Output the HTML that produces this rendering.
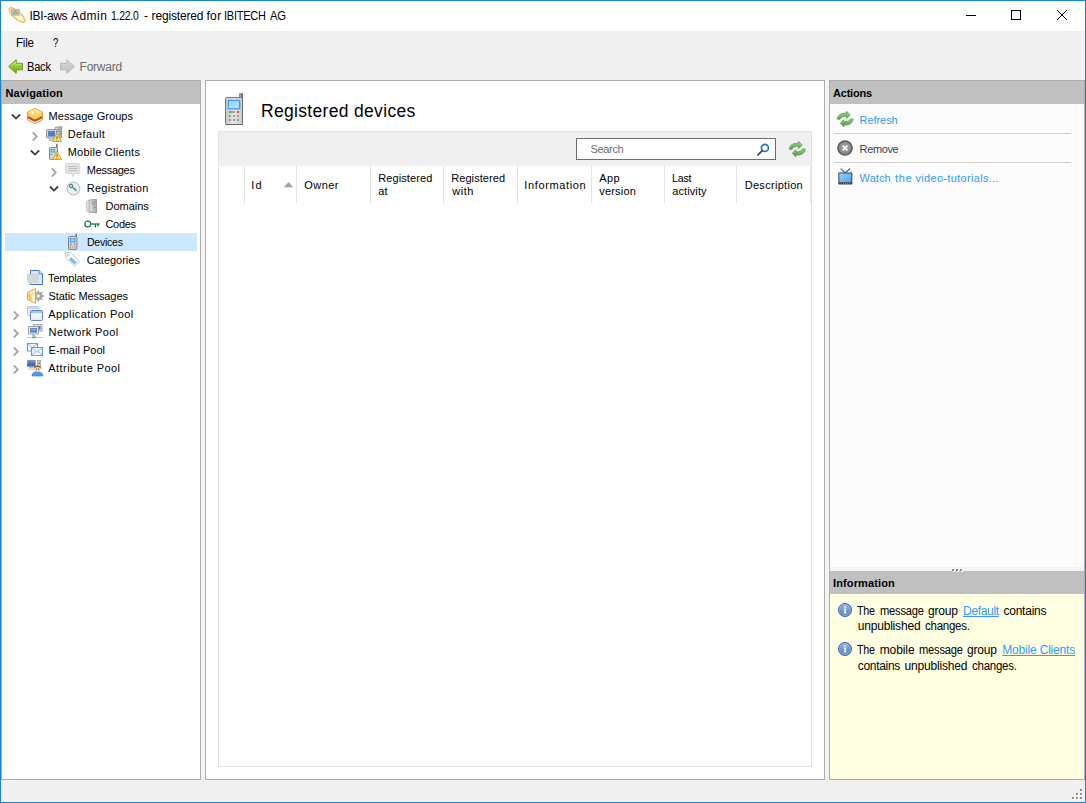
<!DOCTYPE html>
<html lang="en"><head><meta charset="utf-8"><title>IBI-aws Admin 1.22.0 - registered for IBITECH AG</title>
<style>
html,body{margin:0;padding:0}
body{width:1086px;height:803px;position:relative;overflow:hidden;background:#f0f0f0;font-family:"Liberation Sans",sans-serif;font-size:12px;color:#000}
.b{position:absolute;box-sizing:border-box}
.t{position:absolute;white-space:pre;transform-origin:0 0}
.t u{color:#3399ff}
svg{position:absolute;overflow:visible}
.sep{position:absolute;width:1px;top:166px;height:37px;background:#e3e3e3}
</style></head>
<body>
<svg width="0" height="0" style="left:0;top:0"><defs>
<linearGradient id="gGreen" x1="0" y1="0" x2="0" y2="1"><stop offset="0" stop-color="#b5e061"/><stop offset="0.5" stop-color="#8fc92d"/><stop offset="1" stop-color="#6aa610"/></linearGradient>
<linearGradient id="gGrey" x1="0" y1="0" x2="0" y2="1"><stop offset="0" stop-color="#dcdcdc"/><stop offset="1" stop-color="#bdbdbd"/></linearGradient>
<linearGradient id="gPhone" x1="0" y1="0" x2="1" y2="0"><stop offset="0" stop-color="#c4c4c4"/><stop offset="0.45" stop-color="#e6e6e6"/><stop offset="1" stop-color="#cdcdcd"/></linearGradient>
<linearGradient id="gScreen" x1="0" y1="0" x2="0" y2="1"><stop offset="0" stop-color="#9fd6fb"/><stop offset="1" stop-color="#b4e0fb"/></linearGradient>
<linearGradient id="gRef" x1="0" y1="0" x2="0" y2="1"><stop offset="0" stop-color="#a6d99a"/><stop offset="1" stop-color="#55a34b"/></linearGradient>
<linearGradient id="gRef2" x1="0" y1="1" x2="0" y2="0"><stop offset="0" stop-color="#8fce84"/><stop offset="1" stop-color="#479a3e"/></linearGradient>
<radialGradient id="gInfo" cx="0.5" cy="0.3" r="0.7"><stop offset="0" stop-color="#9bbbe6"/><stop offset="1" stop-color="#3f6fb5"/></radialGradient>
<radialGradient id="gRem" cx="0.5" cy="0.45" r="0.6"><stop offset="0" stop-color="#a8a8a8"/><stop offset="1" stop-color="#7a7a7a"/></radialGradient>
<linearGradient id="gTower" x1="0" y1="0" x2="1" y2="0"><stop offset="0" stop-color="#e6e6e6"/><stop offset="1" stop-color="#a8a8a8"/></linearGradient>
<linearGradient id="gWin" x1="0" y1="0" x2="0" y2="1"><stop offset="0" stop-color="#ffffff"/><stop offset="1" stop-color="#e3eaf6"/></linearGradient>
<linearGradient id="gTv" x1="0" y1="0" x2="1" y2="1"><stop offset="0" stop-color="#9ad4ff"/><stop offset="1" stop-color="#4aa3ee"/></linearGradient>
</defs></svg>
<div class="b" style="left:1px;top:1px;width:1084px;height:30px;background:#fff"></div>
<svg style="left:8px;top:6px" width="18" height="18" viewBox="0 0 18 18"><ellipse cx="9" cy="9" rx="10" ry="3.6" transform="rotate(42 9 9)" fill="#fff3d6"/>
<rect x="3" y="2.8" width="8.8" height="7" fill="#9cbcdb" opacity="0.9"/>
<path d="M5.6,8.4 L7.4,4.4 L9.2,8.4 M6.3,7 H8.5" fill="none" stroke="#c9a033" stroke-width="1"/>
<ellipse cx="9" cy="9" rx="10" ry="3.6" transform="rotate(42 9 9)" fill="none" stroke="#f2b444" stroke-width="1.4" opacity="0.85"/></svg>
<svg style="left:960px;top:5px" width="120" height="22" viewBox="0 0 120 22"><path d="M6,10.5 H16" stroke="#000" stroke-width="1"/><rect x="51.5" y="5.5" width="9" height="9" fill="none" stroke="#000" stroke-width="1"/>
<path d="M97,5 L107,15 M107,5 L97,15" stroke="#000" stroke-width="1"/></svg>
<svg style="left:8px;top:59px" width="15" height="15" viewBox="0 0 15 15"><path d="M0.7,7.5 L8.2,0.7 L8.2,4.3 L14.4,4.3 L14.4,10.8 L8.2,10.8 L8.2,14.4 Z" fill="url(#gGreen)" stroke="#6a9a1c" stroke-width="1" stroke-linejoin="round"/><path d="M2.6,7.3 L7.3,3 L7.3,5.3 L13.4,5.3" fill="none" stroke="#d4f08e" stroke-width="0.8" opacity="0.8"/></svg>
<svg style="left:60px;top:59px" width="15" height="15" viewBox="0 0 15 15"><path d="M14.3,7.5 L6.8,0.7 L6.8,4.3 L0.6,4.3 L0.6,10.8 L6.8,10.8 L6.8,14.4 Z" fill="url(#gGrey)" stroke="#b6b6b6" stroke-width="1" stroke-linejoin="round"/></svg>
<div class="b" style="left:201px;top:80px;width:4px;height:700px;background:#f4f4f4"></div>
<div class="b" style="left:825px;top:80px;width:4px;height:700px;background:#f4f4f4"></div>
<div class="b" style="left:1px;top:80px;width:200px;height:700px;background:#fff;border:1px solid #adadad"></div>
<div class="b" style="left:2px;top:81px;width:198px;height:23px;background:#c0c0c0"></div>
<div class="b" style="left:5px;top:233px;width:192px;height:18px;background:#cce8ff"></div>
<div class="b" style="left:205px;top:80px;width:620px;height:700px;background:#fff;border:1px solid #adadad"></div>
<div class="b" style="left:218px;top:131px;width:594px;height:636px;border:1px solid #e2e2e2"></div>
<div class="b" style="left:219px;top:132px;width:592px;height:34px;background:#f0f0f0"></div>
<div class="sep" style="left:244px"></div>
<div class="sep" style="left:296px"></div>
<div class="sep" style="left:370px"></div>
<div class="sep" style="left:443px"></div>
<div class="sep" style="left:517px"></div>
<div class="sep" style="left:591px"></div>
<div class="sep" style="left:664px"></div>
<div class="sep" style="left:736px"></div>
<div class="sep" style="left:810px"></div>
<div class="b" style="left:576px;top:138px;width:200px;height:22px;background:#fff;border:1px solid #6e6e6e"></div>
<svg style="left:283px;top:181px" width="11" height="7" viewBox="0 0 11 7"><path d="M0.8,6.2 L5.5,1 L10.2,6.2 Z" fill="#a3a3a3"/></svg>
<div class="b" style="left:829px;top:80px;width:256px;height:700px;background:#fcfcfc;border:1px solid #adadad"></div>
<div class="b" style="left:830px;top:81px;width:254px;height:23px;background:#c0c0c0"></div>
<div class="b" style="left:834px;top:133px;width:237px;height:1px;background:#cdcdcd"></div>
<div class="b" style="left:834px;top:162px;width:237px;height:1px;background:#cdcdcd"></div>
<div class="b" style="left:830px;top:567px;width:254px;height:4px;background:#f4f4f4"></div>
<div class="b" style="left:830px;top:571px;width:254px;height:23px;background:#c0c0c0"></div>
<div class="b" style="left:830px;top:594px;width:254px;height:185px;background:#ffffe1"></div>
<svg style="left:952px;top:569px" width="12" height="4" viewBox="0 0 12 4"><rect x="1" y="1" width="2" height="2" fill="#fff"/><rect x="0" y="0" width="2" height="2" fill="#8c8c8c"/><rect x="5" y="1" width="2" height="2" fill="#fff"/><rect x="4" y="0" width="2" height="2" fill="#8c8c8c"/><rect x="9" y="1" width="2" height="2" fill="#fff"/><rect x="8" y="0" width="2" height="2" fill="#8c8c8c"/></svg>
<svg style="left:1072px;top:789px" width="12" height="12" viewBox="0 0 12 12"><rect x="9" y="1" width="2" height="2" fill="#fff"/><rect x="8" y="0" width="2" height="2" fill="#8f8f8f"/><rect x="5" y="5" width="2" height="2" fill="#fff"/><rect x="4" y="4" width="2" height="2" fill="#8f8f8f"/><rect x="9" y="5" width="2" height="2" fill="#fff"/><rect x="8" y="4" width="2" height="2" fill="#8f8f8f"/><rect x="1" y="9" width="2" height="2" fill="#fff"/><rect x="0" y="8" width="2" height="2" fill="#8f8f8f"/><rect x="5" y="9" width="2" height="2" fill="#fff"/><rect x="4" y="8" width="2" height="2" fill="#8f8f8f"/><rect x="9" y="9" width="2" height="2" fill="#fff"/><rect x="8" y="8" width="2" height="2" fill="#8f8f8f"/></svg>
<svg style="left:9.5px;top:112.8px" width="12" height="8" viewBox="0 0 12 8"><polyline points="1.9,1.5 6,5.6 10.1,1.5" fill="none" stroke="#404040" stroke-width="1.8"/></svg>
<svg style="left:30.799999999999997px;top:129.5px" width="8" height="12" viewBox="0 0 8 12"><polyline points="1.8,2.4 5.8,6.5 1.8,10.6" fill="none" stroke="#a3a3a3" stroke-width="1.8"/></svg>
<svg style="left:28.5px;top:148.7px" width="12" height="8" viewBox="0 0 12 8"><polyline points="1.9,1.5 6,5.6 10.1,1.5" fill="none" stroke="#404040" stroke-width="1.8"/></svg>
<svg style="left:49.9px;top:165.5px" width="8" height="12" viewBox="0 0 8 12"><polyline points="1.8,2.4 5.8,6.5 1.8,10.6" fill="none" stroke="#a3a3a3" stroke-width="1.8"/></svg>
<svg style="left:47.5px;top:184.7px" width="12" height="8" viewBox="0 0 12 8"><polyline points="1.9,1.5 6,5.6 10.1,1.5" fill="none" stroke="#404040" stroke-width="1.8"/></svg>
<svg style="left:11.7px;top:309.4px" width="8" height="12" viewBox="0 0 8 12"><polyline points="1.8,2.4 5.8,6.5 1.8,10.6" fill="none" stroke="#a3a3a3" stroke-width="1.8"/></svg>
<svg style="left:11.7px;top:327.4px" width="8" height="12" viewBox="0 0 8 12"><polyline points="1.8,2.4 5.8,6.5 1.8,10.6" fill="none" stroke="#a3a3a3" stroke-width="1.8"/></svg>
<svg style="left:11.7px;top:345.4px" width="8" height="12" viewBox="0 0 8 12"><polyline points="1.8,2.4 5.8,6.5 1.8,10.6" fill="none" stroke="#a3a3a3" stroke-width="1.8"/></svg>
<svg style="left:11.7px;top:363.4px" width="8" height="12" viewBox="0 0 8 12"><polyline points="1.8,2.4 5.8,6.5 1.8,10.6" fill="none" stroke="#a3a3a3" stroke-width="1.8"/></svg>
<svg style="left:27px;top:108px" width="16" height="16" viewBox="0 0 16 16"><path d="M8,0.5 L15.5,4 L15.5,11.7 L8,15.5 L0.5,11.7 L0.5,4 Z" fill="#fdf1cf" stroke="#dba236" stroke-width="1" stroke-linejoin="round"/>
<path d="M1,4.2 L8,7.4 L15,4.2 L15,8 L8,11.4 L1,8 Z" fill="#f7cf55"/>
<path d="M1,8 L8,11.4 L15,8 L15,10.4 L8,13.8 L1,10.4 Z" fill="#c9402f"/>
<path d="M1,4 L8,1 L15,4 L8,7.2 Z" fill="#fbdc7c"/><path d="M3,4 L8,1.9 L11,3.2 L6,5.6 Z" fill="#fff3c9"/>
<path d="M8,1.5 L8,6.8" stroke="#e3a93c" stroke-width="0.8"/></svg>
<svg style="left:46px;top:126px" width="16" height="16" viewBox="0 0 16 16"><path d="M9,1.5 L15.5,0.5 L15.5,12 L9,12 Z" fill="url(#gTower)" stroke="#8a8a8a" stroke-width="0.8"/>
<rect x="11" y="3" width="3.5" height="1" fill="#8a8a8a"/><rect x="11" y="5" width="3.5" height="1" fill="#8a8a8a"/><rect x="13" y="7.5" width="1.5" height="1.5" fill="#42b34a"/>
<rect x="0.5" y="3.5" width="10" height="8.5" rx="1" fill="#d4d4d4" stroke="#8a8a8a" stroke-width="0.9"/>
<rect x="2" y="5" width="7" height="5.5" fill="#4f7fd0"/>
<path d="M3,13.5 h5 v1.2 h-5z" fill="#9a9a9a"/><path d="M11,7.2 l4.6,8.2 h-9.2 z" fill="#ffe066" stroke="#dc9a35" stroke-width="1" stroke-linejoin="round"/><rect x="10.5" y="10.2" width="1" height="2.6" fill="#8a5a10"/><rect x="10.5" y="13.600000000000001" width="1" height="1" fill="#8a5a10"/></svg>
<svg style="left:46px;top:144px" width="16" height="16" viewBox="0 0 16 16"><rect x="10.2" y="0" width="1.2" height="4" fill="#555"/>
<rect x="3.5" y="3.5" width="8" height="12" rx="1" fill="url(#gPhone)" stroke="#7c7c7c" stroke-width="0.9"/>
<rect x="4.8" y="5" width="4.4" height="3.6" fill="#3fa4ff"/><rect x="5.6" y="5.8" width="2.6" height="1.6" fill="#9bd3ff"/>
<rect x="4.8" y="10" width="1.8" height="0.9" fill="#4cb04c"/><path d="M11,7.2 l4.6,8.2 h-9.2 z" fill="#ffe066" stroke="#dc9a35" stroke-width="1" stroke-linejoin="round"/><rect x="10.5" y="10.2" width="1" height="2.6" fill="#8a5a10"/><rect x="10.5" y="13.600000000000001" width="1" height="1" fill="#8a5a10"/></svg>
<svg style="left:65px;top:162.5px" width="16" height="16" viewBox="0 0 16 16"><path d="M1.5,0.5 h12 a1.2,1.2 0 0 1 1.2,1.2 v7.6 a1.2,1.2 0 0 1 -1.2,1.2 h-3.3 l-2.6,3 l-0.4,-3 h-5.7 a1.2,1.2 0 0 1 -1.2,-1.2 v-7.6 a1.2,1.2 0 0 1 1.2,-1.2z" fill="#e4e4e4" stroke="#d2d2d2" stroke-width="0.8"/>
<rect x="3" y="3" width="9.6" height="0.9" fill="#b9b9b9"/><rect x="3" y="5" width="9.6" height="0.9" fill="#b9b9b9"/><rect x="3" y="7" width="9.6" height="0.9" fill="#b9b9b9"/></svg>
<svg style="left:66px;top:180.5px" width="16" height="16" viewBox="0 0 16 16"><circle cx="7.5" cy="7.6" r="6.4" fill="#efeff9" stroke="#b4b4bc" stroke-width="1"/>
<circle cx="5" cy="5" r="1.6" fill="none" stroke="#3e8f62" stroke-width="1.1"/><path d="M6.2,6.2 L10.2,10.2 M8.2,8.4 l1.2,-1.2 M9.5,9.6 l1,-1" stroke="#3e8f62" stroke-width="1.1" fill="none"/></svg>
<svg style="left:85px;top:199px" width="16" height="16" viewBox="0 0 16 16"><path d="M4,1 L11.5,0.5 L11.5,14 L4,13 Z" fill="url(#gTower)" stroke="#8e8e8e" stroke-width="0.8"/>
<path d="M4,1 L1.5,2.5 L1.5,12 L4,13 Z" fill="#dedede" stroke="#b0b0b0" stroke-width="0.6"/>
<rect x="6.5" y="2.6" width="4" height="0.9" fill="#8a8a8a"/><rect x="6.5" y="4.6" width="4" height="0.9" fill="#8a8a8a"/><rect x="8.8" y="7.6" width="1.6" height="1.6" fill="#3fae49"/></svg>
<svg style="left:84px;top:220px" width="16" height="16" viewBox="0 0 16 16"><circle cx="3.8" cy="4" r="2.9" fill="none" stroke="#1f7446" stroke-width="1.25"/>
<path d="M6.8,4 H15.6" stroke="#1f7446" stroke-width="1.25"/><path d="M11.4,4 v3.6 M14,4 v2.4" stroke="#1f7446" stroke-width="1.3"/></svg>
<svg style="left:68px;top:234px" width="16" height="16" viewBox="0 0 16 16"><rect x="7.6" y="0" width="1.2" height="3" fill="#555"/>
<rect x="0.5" y="2.5" width="8.4" height="13" rx="1.2" fill="url(#gPhone)" stroke="#7c7c7c" stroke-width="0.9"/>
<rect x="2" y="4.2" width="5.4" height="4.2" fill="#3a9dff"/><rect x="3" y="5.2" width="3.4" height="2" fill="#a6d8ff"/>
<rect x="2" y="9.6" width="2" height="1" fill="#4cb04c"/><rect x="5.6" y="9.6" width="1.6" height="1" fill="#e04848"/>
<g fill="#8a8a8a"><rect x="2" y="11.6" width="1.2" height="1"/><rect x="4.1" y="11.6" width="1.2" height="1"/><rect x="6.2" y="11.6" width="1.2" height="1"/><rect x="2" y="13.4" width="1.2" height="1"/><rect x="4.1" y="13.4" width="1.2" height="1"/><rect x="6.2" y="13.4" width="1.2" height="1"/></g></svg>
<svg style="left:65px;top:252.4px" width="16" height="16" viewBox="0 0 16 16"><path d="M0.6,0.8 L5.6,0.6 L14.6,9.2 L9.6,14.2 L0.8,5.6 Z" fill="#fdfdfd" stroke="#c4c4c4" stroke-width="1" stroke-linejoin="round"/>
<circle cx="3" cy="3" r="1" fill="#fff" stroke="#b0b0b0" stroke-width="0.7"/>
<path d="M6.2,5 L11.8,10.4 L9.4,12.6 L4,7.4 Z" fill="#7cbcf4"/></svg>
<svg style="left:27px;top:270px" width="16" height="16" viewBox="0 0 16 16"><path d="M3.5,0.5 H12 L15.5,4 V14.5 H3.5 Z" fill="#dce9fb" stroke="#3f77d4" stroke-width="1" stroke-linejoin="round"/>
<path d="M12,0.5 V4 H15.5" fill="#cfe0fa" stroke="#3f77d4" stroke-width="0.8"/>
<path d="M1.6,4.3 h8 a1.2,1.2 0 0 1 1.2,1.2 v5 a1.2,1.2 0 0 1 -1.2,1.2 h-4 l-3,2.8 l0.4,-2.8 h-1.4 a1.2,1.2 0 0 1 -1.2,-1.2 v-5 a1.2,1.2 0 0 1 1.2,-1.2z" fill="#d9d9d9" stroke="#c2c2c2" stroke-width="0.7"/></svg>
<svg style="left:27px;top:288.4px" width="16" height="16" viewBox="0 0 16 16"><g fill="#a6a6a6"><circle cx="11.3" cy="8" r="3.7"/><rect x="10.3" y="2.6" width="2" height="10.8"/><rect x="10.3" y="2.6" width="2" height="10.8" transform="rotate(45 11.3 8)"/><rect x="10.3" y="2.6" width="2" height="10.8" transform="rotate(90 11.3 8)"/><rect x="10.3" y="2.6" width="2" height="10.8" transform="rotate(135 11.3 8)"/></g><circle cx="11.3" cy="8" r="1.7" fill="#f6f6f6"/>
<path d="M8.6,0.6 L8.6,15.4 L0.6,11.6 L0.6,4.4 Z" fill="#fdf0c8" stroke="#dda63a" stroke-width="1" stroke-linejoin="round"/>
<path d="M1.1,4.7 L4.6,6.4 L4.6,13 L1.1,11.3 Z" fill="#f4c85c"/><path d="M4.6,6.4 L8.1,4.6" stroke="#eec264" stroke-width="0.7"/></svg>
<svg style="left:27px;top:306px" width="16" height="16" viewBox="0 0 16 16"><rect x="0.5" y="0.5" width="11.5" height="9" rx="1" fill="#e8effb" stroke="#b4c8ec" stroke-width="1"/><rect x="1" y="1" width="10.5" height="2" fill="#cad9f4"/>
<rect x="3.5" y="4.5" width="12" height="10" rx="1" fill="url(#gWin)" stroke="#5d88d6" stroke-width="1"/><rect x="4" y="5" width="11" height="2.2" fill="#a9c2ee"/></svg>
<svg style="left:27px;top:324px" width="16" height="16" viewBox="0 0 16 16"><rect x="6.5" y="0.6" width="8.6" height="6.6" fill="#e2e2e2" stroke="#9a9a9a" stroke-width="0.8"/><rect x="8" y="2" width="5.6" height="3.8" fill="#4f79c4"/>
<rect x="1.5" y="2.6" width="10" height="7.4" fill="#e4e4e4" stroke="#9a9a9a" stroke-width="0.8"/><rect x="3" y="4" width="7" height="4.6" fill="#5b88d4"/><rect x="4" y="5" width="5" height="1.2" fill="#8fb2e8"/>
<rect x="5" y="10.4" width="3" height="1.2" fill="#a8a8a8"/>
<rect x="0" y="13" width="16" height="1" fill="#c4cec8"/><rect x="5" y="12.6" width="4" height="1.6" fill="#56b878"/><rect x="6.5" y="11.4" width="1" height="1.5" fill="#56b878"/></svg>
<svg style="left:27px;top:342px" width="16" height="16" viewBox="0 0 16 16"><rect x="0.5" y="1.5" width="10" height="7.5" fill="#f2f6fd" stroke="#5f8cd9" stroke-width="0.9"/><path d="M0.8,1.8 L5.5,6 L10.2,1.8" fill="none" stroke="#8fb0e6" stroke-width="0.9"/>
<rect x="4.5" y="5.5" width="11" height="8" fill="#f2f6fd" stroke="#5f8cd9" stroke-width="0.9"/><path d="M4.8,5.8 L10,10.4 L15.2,5.8 M4.8,13.2 L8.6,9.4 M15.2,13.2 L11.4,9.4" fill="none" stroke="#8fb0e6" stroke-width="0.9"/></svg>
<svg style="left:27px;top:360px" width="16" height="16" viewBox="0 0 16 16"><rect x="10.6" y="0.4" width="3.2" height="8" fill="#d2d2d2" stroke="#8e8e8e" stroke-width="0.6"/><rect x="11.4" y="2.4" width="1.6" height="1.6" fill="#3fae49"/>
<rect x="0.3" y="0.3" width="8" height="6" fill="#5d83c8" stroke="#6b88bc" stroke-width="0.5"/><rect x="0.3" y="3.4" width="8" height="2.9" fill="#4468ae"/>
<rect x="2" y="7" width="4.6" height="1.4" fill="#bdbdbd"/><rect x="0.8" y="8.6" width="7" height="1.2" fill="#d2d2d2"/>
<path d="M5,16 C5,12.8 7,11.8 10.4,11.8 C13.8,11.8 15.8,12.8 15.8,16 Z" fill="#4a9ff4" stroke="#2f74c8" stroke-width="0.6"/>
<circle cx="10.4" cy="8.8" r="3.1" fill="#f8cfa8"/>
<path d="M6.9,8.8 C6.6,4.4 14.2,4.4 13.9,8.8 C12.8,7.2 11.4,6.8 10.4,7.2 C9.4,6.8 8,7.2 6.9,8.8 Z" fill="#9a4c16"/><rect x="9" y="8.6" width="0.9" height="1" fill="#5a3a20"/><rect x="11.2" y="8.6" width="0.9" height="1" fill="#5a3a20"/></svg>
<svg style="left:218px;top:93px" width="32" height="32" viewBox="0 0 32 32"><rect x="21.2" y="0.2" width="3.8" height="5" fill="#6e6e6e"/><rect x="21.8" y="0.4" width="1.4" height="4" fill="#a8a8a8"/>
<rect x="7.5" y="4.5" width="17" height="27" rx="1" fill="url(#gPhone)" stroke="#787878" stroke-width="1"/>
<path d="M24.5,5 V31.5 H7.5" fill="none" stroke="#6a6a6a" stroke-width="1"/>
<rect x="9.8" y="6.7" width="12.6" height="9.9" rx="1" fill="#3d9cff"/><rect x="11" y="8" width="10" height="7.2" fill="url(#gScreen)"/>
<rect x="11" y="18" width="4" height="2" fill="#5cba5c"/><rect x="15" y="18" width="2" height="2" fill="#a9a9a9"/><rect x="19" y="18" width="2" height="2" fill="#e04a55"/>
<g fill="#9a9a9a"><rect x="11" y="22" width="2" height="2"/><rect x="15" y="22" width="2" height="2"/><rect x="19" y="22" width="2" height="2"/><rect x="11" y="26" width="2" height="2"/><rect x="15" y="26" width="2" height="2"/><rect x="19" y="26" width="2" height="2"/></g></svg>
<svg style="left:757px;top:143px" width="14" height="14" viewBox="0 0 14 14"><circle cx="7.9" cy="4.9" r="3.5" fill="#fff" stroke="#2e70c4" stroke-width="1.7"/><path d="M5.2,7.6 L1,11.8" stroke="#22467f" stroke-width="1.7" stroke-linecap="round"/></svg>
<svg style="left:789px;top:141px" width="16" height="16" viewBox="0 0 16 16"><g><path d="M0.3,8.2 C0.5,4 4.6,1.8 9.6,2.2 L9.6,0.3 L13.2,3.9 L9.6,7.5 L9.6,5.4 C6.6,5.1 4,5.9 3,8.2 Z" fill="url(#gRef)" stroke="#4a9641" stroke-width="0.7" stroke-linejoin="round"/>
<path d="M0.3,8.2 C0.5,4 4.6,1.8 9.6,2.2 L9.6,0.3 L13.2,3.9 L9.6,7.5 L9.6,5.4 C6.6,5.1 4,5.9 3,8.2 Z" transform="rotate(180 8.25 8.1)" fill="url(#gRef2)" stroke="#4a9641" stroke-width="0.7" stroke-linejoin="round"/></g></svg>
<svg style="left:837px;top:111px" width="16" height="16" viewBox="0 0 16 16"><g><path d="M0.3,8.2 C0.5,4 4.6,1.8 9.6,2.2 L9.6,0.3 L13.2,3.9 L9.6,7.5 L9.6,5.4 C6.6,5.1 4,5.9 3,8.2 Z" fill="url(#gRef)" stroke="#4a9641" stroke-width="0.7" stroke-linejoin="round"/>
<path d="M0.3,8.2 C0.5,4 4.6,1.8 9.6,2.2 L9.6,0.3 L13.2,3.9 L9.6,7.5 L9.6,5.4 C6.6,5.1 4,5.9 3,8.2 Z" transform="rotate(180 8.25 8.1)" fill="url(#gRef2)" stroke="#4a9641" stroke-width="0.7" stroke-linejoin="round"/></g></svg>
<svg style="left:837px;top:140px" width="16" height="16" viewBox="0 0 16 16"><circle cx="8" cy="8" r="7.1" fill="url(#gRem)" stroke="#5c5c5c" stroke-width="1.5"/><path d="M5.6,5.6 L10.4,10.4 M10.4,5.6 L5.6,10.4" stroke="#fff" stroke-width="1.9"/></svg>
<svg style="left:838px;top:168px" width="15" height="17" viewBox="0 0 15 17"><path d="M2.6,0.6 L7.2,5 L12,0.6" fill="none" stroke="#5274ae" stroke-width="1.3"/><rect x="0.3" y="4.6" width="14" height="12" rx="1" fill="#3f3f3f"/><rect x="1.3" y="5.5" width="12" height="8.8" fill="url(#gTv)"/><rect x="2.4" y="14.9" width="1.4" height="1" fill="#e03030"/><g fill="#9a9a9a"><rect x="5" y="15" width="1" height="0.8"/><rect x="7" y="15" width="1" height="0.8"/><rect x="9" y="15" width="1" height="0.8"/><rect x="11" y="15" width="1" height="0.8"/></g></svg>
<svg style="left:838px;top:602.9px" width="14" height="14" viewBox="0 0 14 14"><circle cx="7" cy="7" r="6.5" fill="url(#gInfo)" stroke="#3f64aa" stroke-width="1"/><circle cx="7" cy="7" r="5.4" fill="none" stroke="#b4c9ea" stroke-width="0.8" opacity="0.85"/>
<rect x="6.3" y="3.1" width="1.5" height="1.5" fill="#fff"/><path d="M5.9,5.7 h1.9 v3.8 h0.8 v1 h-3 v-1 h0.8 v-2.8 h-0.5z" fill="#fff"/></svg>
<svg style="left:838px;top:641.8px" width="14" height="14" viewBox="0 0 14 14"><circle cx="7" cy="7" r="6.5" fill="url(#gInfo)" stroke="#3f64aa" stroke-width="1"/><circle cx="7" cy="7" r="5.4" fill="none" stroke="#b4c9ea" stroke-width="0.8" opacity="0.85"/>
<rect x="6.3" y="3.1" width="1.5" height="1.5" fill="#fff"/><path d="M5.9,5.7 h1.9 v3.8 h0.8 v1 h-3 v-1 h0.8 v-2.8 h-0.5z" fill="#fff"/></svg>
<div class="b" style="left:0px;top:0px;width:1086px;height:803px;border:1px solid #1883d7;pointer-events:none"></div>
<span class="t" id="title_0" style="left:29.60px;top:7.74px;font-size:12px;line-height:16px;letter-spacing:-0.335px;">IBI-aws</span>
<span class="t" id="title_1" style="left:71.00px;top:7.74px;font-size:12px;line-height:16px;letter-spacing:0.465px;">Admin</span>
<span class="t" id="title_2" style="left:111.40px;top:7.74px;font-size:12px;line-height:16px;transform:scaleX(0.8631);letter-spacing:-0.250px;">1.22.0</span>
<span class="t" id="title_3" style="left:144.00px;top:7.74px;font-size:12px;line-height:16px;">-</span>
<span class="t" id="title_4" style="left:151.60px;top:7.74px;font-size:12px;line-height:16px;letter-spacing:-0.165px;">registered</span>
<span class="t" id="title_5" style="left:206.40px;top:7.74px;font-size:12px;line-height:16px;letter-spacing:0.396px;">for</span>
<span class="t" id="title_6" style="left:224.09px;top:7.74px;font-size:12px;line-height:16px;transform:scaleX(0.9123);letter-spacing:-0.250px;">IBITECH</span>
<span class="t" id="title_7" style="left:269.70px;top:7.74px;font-size:12px;line-height:16px;transform:scaleX(0.9371);letter-spacing:-0.250px;">AG</span>
<span class="t" id="mfile" style="left:16.00px;top:34.74px;font-size:12px;line-height:16px;transform:scaleX(0.9676);letter-spacing:-0.250px;">File</span>
<span class="t" id="mq" style="left:53.20px;top:34.74px;font-size:12px;line-height:16px;transform:scaleX(0.8);">?</span>
<span class="t" id="back" style="left:27.20px;top:59.04px;font-size:12px;line-height:16px;transform:scaleX(0.9247);letter-spacing:-0.250px;">Back</span>
<span class="t" id="fwd" style="left:79.60px;top:59.04px;font-size:12px;line-height:16px;letter-spacing:-0.256px;color:#6d6d6d;">Forward</span>
<span class="t" id="hnav" style="left:5.50px;top:85.69px;font-size:11px;line-height:15px;letter-spacing:0.110px;font-weight:bold;">Navigation</span>
<span class="t" id="hact" style="left:833.00px;top:85.69px;font-size:11px;line-height:15px;letter-spacing:-0.203px;font-weight:bold;">Actions</span>
<span class="t" id="hinf" style="left:833.00px;top:575.69px;font-size:11px;line-height:15px;letter-spacing:0.122px;font-weight:bold;">Information</span>
<span class="t" id="tr0" style="left:48.50px;top:108.69px;font-size:11px;line-height:15px;letter-spacing:0.057px;">Message Groups</span>
<span class="t" id="tr1" style="left:67.70px;top:126.69px;font-size:11px;line-height:15px;letter-spacing:0.384px;">Default</span>
<span class="t" id="tr2" style="left:67.70px;top:144.69px;font-size:11px;line-height:15px;letter-spacing:0.240px;">Mobile Clients</span>
<span class="t" id="tr3" style="left:86.80px;top:162.69px;font-size:11px;line-height:15px;letter-spacing:-0.291px;">Messages</span>
<span class="t" id="tr4" style="left:86.80px;top:180.69px;font-size:11px;line-height:15px;letter-spacing:0.257px;">Registration</span>
<span class="t" id="tr5" style="left:105.50px;top:198.69px;font-size:11px;line-height:15px;letter-spacing:-0.017px;">Domains</span>
<span class="t" id="tr6" style="left:105.50px;top:216.69px;font-size:11px;line-height:15px;letter-spacing:-0.324px;">Codes</span>
<span class="t" id="tr7" style="left:86.80px;top:234.69px;font-size:11px;line-height:15px;transform:scaleX(0.9548);letter-spacing:-0.250px;">Devices</span>
<span class="t" id="tr8" style="left:86.80px;top:252.69px;font-size:11px;line-height:15px;letter-spacing:-0.011px;">Categories</span>
<span class="t" id="tr9" style="left:48.10px;top:270.69px;font-size:11px;line-height:15px;letter-spacing:-0.204px;">Templates</span>
<span class="t" id="tr10" style="left:48.60px;top:288.69px;font-size:11px;line-height:15px;letter-spacing:-0.100px;">Static Messages</span>
<span class="t" id="tr11" style="left:48.30px;top:306.69px;font-size:11px;line-height:15px;letter-spacing:0.404px;">Application Pool</span>
<span class="t" id="tr12" style="left:48.60px;top:324.69px;font-size:11px;line-height:15px;letter-spacing:0.384px;">Network Pool</span>
<span class="t" id="tr13" style="left:48.60px;top:342.69px;font-size:11px;line-height:15px;letter-spacing:0.020px;">E-mail Pool</span>
<span class="t" id="tr14" style="left:48.30px;top:360.69px;font-size:11px;line-height:15px;letter-spacing:0.439px;">Attribute Pool</span>
<span class="t" id="h1" style="left:261.00px;top:100.14px;font-size:17.5px;line-height:23px;letter-spacing:0.319px;">Registered devices</span>
<span class="t" id="search" style="left:590.40px;top:142.29px;font-size:11px;line-height:15px;letter-spacing:-0.307px;color:#6d6d6d;">Search</span>
<span class="t" id="cid" style="left:251.30px;top:178.09px;font-size:11px;line-height:15px;letter-spacing:1.144px;">Id</span>
<span class="t" id="cowner" style="left:304.30px;top:178.09px;font-size:11px;line-height:15px;letter-spacing:0.441px;">Owner</span>
<span class="t" id="creg1" style="left:378.30px;top:171.49px;font-size:11px;line-height:15px;letter-spacing:0.091px;">Registered</span>
<span class="t" id="creg1b" style="left:378.30px;top:184.29px;font-size:11px;line-height:15px;letter-spacing:0.082px;">at</span>
<span class="t" id="creg2" style="left:451.20px;top:171.49px;font-size:11px;line-height:15px;letter-spacing:0.080px;">Registered</span>
<span class="t" id="creg2b" style="left:452.20px;top:184.29px;font-size:11px;line-height:15px;letter-spacing:0.552px;">with</span>
<span class="t" id="cinfo" style="left:524.30px;top:178.09px;font-size:11px;line-height:15px;letter-spacing:0.629px;">Information</span>
<span class="t" id="capp" style="left:599.30px;top:171.49px;font-size:11px;line-height:15px;letter-spacing:0.423px;">App</span>
<span class="t" id="cappb" style="left:599.30px;top:184.29px;font-size:11px;line-height:15px;letter-spacing:0.176px;">version</span>
<span class="t" id="clast" style="left:672.20px;top:171.49px;font-size:11px;line-height:15px;transform:scaleX(0.9707);letter-spacing:-0.250px;">Last</span>
<span class="t" id="clastb" style="left:672.20px;top:184.29px;font-size:11px;line-height:15px;letter-spacing:0.112px;">activity</span>
<span class="t" id="cdesc" style="left:744.70px;top:178.09px;font-size:11px;line-height:15px;letter-spacing:0.300px;">Description</span>
<span class="t" id="arefresh" style="left:859.60px;top:112.89px;font-size:11px;line-height:15px;letter-spacing:-0.066px;color:#3399ff;">Refresh</span>
<span class="t" id="aremove" style="left:859.60px;top:141.89px;font-size:11px;line-height:15px;letter-spacing:-0.368px;color:#404040;">Remove</span>
<span class="t" id="awatch_0" style="left:859.60px;top:170.69px;font-size:11px;line-height:15px;letter-spacing:0.088px;color:#3399ff;">Watch</span>
<span class="t" id="awatch_1" style="left:895.10px;top:170.69px;font-size:11px;line-height:15px;letter-spacing:0.563px;color:#3399ff;">the</span>
<span class="t" id="awatch_2" style="left:915.40px;top:170.69px;font-size:11px;line-height:15px;letter-spacing:0.330px;color:#3399ff;">video-tutorials...</span>
<span class="t" id="i1_0" style="left:857.40px;top:603.04px;font-size:12px;line-height:16px;transform:scaleX(0.8925);letter-spacing:-0.250px;">The</span>
<span class="t" id="i1_1" style="left:879.70px;top:603.04px;font-size:12px;line-height:16px;transform:scaleX(0.9302);letter-spacing:-0.250px;">message</span>
<span class="t" id="i1_2" style="left:928.10px;top:603.04px;font-size:12px;line-height:16px;letter-spacing:-0.204px;">group</span>
<span class="t" id="i1_3" style="left:963.10px;top:603.04px;font-size:12px;line-height:16px;letter-spacing:-0.331px;color:#3399ff;text-decoration:underline;">Default</span>
<span class="t" id="i1_4" style="left:1003.50px;top:603.04px;font-size:12px;line-height:16px;letter-spacing:-0.242px;">contains</span>
<span class="t" id="i2_0" style="left:857.70px;top:618.04px;font-size:12px;line-height:16px;letter-spacing:-0.185px;">unpublished</span>
<span class="t" id="i2_1" style="left:924.70px;top:618.04px;font-size:12px;line-height:16px;transform:scaleX(0.9567);letter-spacing:-0.250px;">changes.</span>
<span class="t" id="i3_0" style="left:857.40px;top:642.04px;font-size:12px;line-height:16px;transform:scaleX(0.8925);letter-spacing:-0.250px;">The</span>
<span class="t" id="i3_1" style="left:879.70px;top:642.04px;font-size:12px;line-height:16px;letter-spacing:-0.095px;">mobile</span>
<span class="t" id="i3_2" style="left:918.90px;top:642.04px;font-size:12px;line-height:16px;transform:scaleX(0.9302);letter-spacing:-0.250px;">message</span>
<span class="t" id="i3_3" style="left:966.90px;top:642.04px;font-size:12px;line-height:16px;letter-spacing:-0.179px;">group</span>
<span class="t" id="i3_4" style="left:1002.30px;top:642.04px;font-size:12px;line-height:16px;letter-spacing:-0.189px;color:#3399ff;text-decoration:underline;">Mobile Clients</span>
<span class="t" id="i4_0" style="left:857.70px;top:658.04px;font-size:12px;line-height:16px;letter-spacing:-0.299px;">contains</span>
<span class="t" id="i4_1" style="left:904.60px;top:658.04px;font-size:12px;line-height:16px;letter-spacing:-0.185px;">unpublished</span>
<span class="t" id="i4_2" style="left:971.60px;top:658.04px;font-size:12px;line-height:16px;transform:scaleX(0.9567);letter-spacing:-0.250px;">changes.</span>
</body></html>
